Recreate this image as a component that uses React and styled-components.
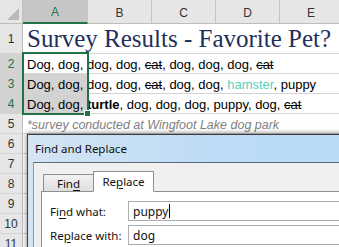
import styled, { createGlobalStyle } from "styled-components";

const GlobalStyle = createGlobalStyle`
  html, body { margin: 0; padding: 0; background: #fff; overflow: hidden; }
  body { width: 339px; height: 247px; font-family: "Liberation Sans", Arial, sans-serif; }
`;

const GREEN = "#217346";
const GRID = "#d4d4d4";

const columns = [
  { id: "A", width: 65, selected: true },
  { id: "B", width: 64 },
  { id: "C", width: 64 },
  { id: "D", width: 64 },
  { id: "E", width: 63 },
  { id: "F", width: 63 },
];

export default function App() {
  return (
    <>
      <GlobalStyle />
      <Sheet>
        <HeaderRow>
          <Corner>
            <svg width="12" height="12" viewBox="0 0 12 12">
              <polygon points="12,0 12,12 0,12" fill="#b9b9b9" />
            </svg>
          </Corner>
          {columns.map((c) => (
            <ColHead key={c.id} $w={c.width} $selected={c.selected}>
              {c.id}
            </ColHead>
          ))}
        </HeaderRow>

        <Row $h={30}>
          <RowHead>1</RowHead>
          <Title>Survey Results - Favorite Pet?</Title>
        </Row>

        <Row>
          <RowHead $selected>2</RowHead>
          <Cell>
            Dog, dog, dog, dog, <s>cat</s>, dog, dog, dog, <s>cat</s>
          </Cell>
        </Row>
        <Row>
          <RowHead $selected>3</RowHead>
          <Cell $shaded>
            Dog, dog, dog, dog, <s>cat</s>, dog, dog, <Teal>hamster</Teal>, puppy
          </Cell>
        </Row>
        <Row>
          <RowHead $selected>4</RowHead>
          <Cell $shaded>
            Dog, dog, <b>turtle</b>, dog, dog, dog, puppy, dog, <s>cat</s>
          </Cell>
        </Row>
        <Row>
          <RowHead>5</RowHead>
          <Note>*survey conducted at Wingfoot Lake dog park</Note>
        </Row>
        {[6, 7, 8, 9, 10, 11].map((n) => (
          <Row key={n}>
            <RowHead>{n}</RowHead>
            <Cell />
          </Row>
        ))}

        <Selection>
          <FillHandle />
        </Selection>

        <Dialog>
          <TitleBar>Find and Replace</TitleBar>
          <Body>
            <Tabs>
              <Tab>
                Fin<u>d</u>
              </Tab>
              <Tab $active>
                Re<u>p</u>lace
              </Tab>
            </Tabs>
            <Panel>
              <Field>
                <Label>
                  Fi<u>n</u>d what:
                </Label>
                <Input>
                  puppy<Caret />
                </Input>
              </Field>
              <Field>
                <Label>
                  Re<u>p</u>lace with:
                </Label>
                <Input>dog</Input>
              </Field>
            </Panel>
          </Body>
        </Dialog>
      </Sheet>
    </>
  );
}

const Sheet = styled.div`
  position: relative;
  width: 339px;
  height: 247px;
  overflow: hidden;
  background: #fff;
`;

const HeaderRow = styled.div`
  display: flex;
  height: 24px;
  box-sizing: border-box;
  background: #e6e6e6;
  border-bottom: 1px solid #bdbdbd;
`;

const Corner = styled.div`
  width: 23px;
  flex: none;
  display: flex;
  align-items: flex-end;
  justify-content: flex-end;
  padding: 0 3px 3px 0;
  box-sizing: border-box;
  border-right: 1px solid #bdbdbd;
`;

const ColHead = styled.div`
  width: ${({ $w }) => $w}px;
  flex: none;
  box-sizing: border-box;
  display: flex;
  align-items: center;
  justify-content: center;
  padding-top: 2px;
  font-family: "Liberation Sans", Arial, sans-serif;
  font-size: 12px;
  color: ${({ $selected }) => ($selected ? GREEN : "#333")};
  background: ${({ $selected }) => ($selected ? "#c6c6c6" : "transparent")};
  border-right: 1px solid #c4c4c4;
  border-bottom: ${({ $selected }) => ($selected ? `2px solid ${GREEN}` : "none")};
  margin-bottom: ${({ $selected }) => ($selected ? "-1px" : "0")};
`;

const Row = styled.div`
  display: flex;
  height: ${({ $h }) => $h || 20}px;
  box-sizing: border-box;
  border-bottom: 1px solid ${GRID};
`;

const RowHead = styled.div`
  width: 23px;
  flex: none;
  box-sizing: border-box;
  display: flex;
  align-items: center;
  justify-content: center;
  font-family: "Liberation Sans", Arial, sans-serif;
  font-size: 12px;
  color: ${({ $selected }) => ($selected ? GREEN : "#333")};
  background: ${({ $selected }) => ($selected ? "#d2d2d2" : "#e6e6e6")};
  border-right: 1px solid #bdbdbd;
`;

const Cell = styled.div`
  flex: 1;
  padding: 3px 0 0 4px;
  line-height: 16px;
  white-space: nowrap;
  font-family: "Liberation Sans", Arial, sans-serif;
  font-size: 13px;
  color: #000;
  background: ${({ $shaded }) =>
    $shaded ? "linear-gradient(to right, #d2d2d2 64px, transparent 64px)" : "none"};
  s { text-decoration-thickness: 1px; }
  b { font-weight: 700; }
`;

const Teal = styled.span`
  color: #5bd0bd;
`;

const Title = styled.div`
  flex: 1;
  padding: 1px 0 0 4px;
  line-height: 28px;
  white-space: nowrap;
  font-family: "Liberation Serif", "Times New Roman", serif;
  font-size: 25px;
  color: #1f2f5c;
`;

const Note = styled(Cell)`
  font-style: italic;
  font-size: 12.5px;
  color: #7f7f7f;
`;

const Selection = styled.div`
  position: absolute;
  left: 22px;
  top: 52px;
  width: 67px;
  height: 63px;
  box-sizing: border-box;
  border: 2px solid ${GREEN};
  pointer-events: none;
`;

const FillHandle = styled.div`
  position: absolute;
  right: -4px;
  bottom: -4px;
  width: 5px;
  height: 5px;
  background: ${GREEN};
  border: 1px solid #fff;
`;

const Dialog = styled.div`
  position: absolute;
  left: 27px;
  top: 134px;
  right: -20px;
  bottom: -20px;
  display: flex;
  flex-direction: column;
  border: 1px solid #3c3c3c;
  background: linear-gradient(to right, #d4e4f3, #bcdbf6 60%, #b8dbf7);
  box-shadow: 0 -2px 4px rgba(0, 0, 0, 0.25), -2px 0 4px rgba(0, 0, 0, 0.2);
  font-family: "Noto Sans", "Open Sans", sans-serif;
`;

const TitleBar = styled.div`
  height: 27px;
  flex: none;
  display: flex;
  align-items: center;
  padding-left: 7px;
  font-size: 11.5px;
  color: #111;
`;

const Body = styled.div`
  flex: 1;
  margin-left: 5px;
  background: #f0f0f0;
  border-top: 1px solid #5a6b7c;
  border-left: 1px solid #8a9aab;
  padding: 8px 0 0 7px;
  display: flex;
  flex-direction: column;
`;

const Tabs = styled.div`
  display: flex;
  align-items: flex-end;
  height: 21px;
  padding-left: 2px;
  margin-bottom: -1px;
  position: relative;
  z-index: 1;
`;

const Tab = styled.div`
  box-sizing: border-box;
  height: ${({ $active }) => ($active ? 21 : 18)}px;
  width: ${({ $active }) => ($active ? 61 : 51)}px;
  display: flex;
  align-items: center;
  justify-content: center;
  padding-top: ${({ $active }) => ($active ? 0 : 1)}px;
  font-size: 11.5px;
  color: #111;
  border: 1px solid #8e8f8f;
  border-bottom: ${({ $active }) => ($active ? "1px solid #fff" : "1px solid #8e8f8f")};
  margin-left: ${({ $active }) => ($active ? "-1px" : "0")};
  background: ${({ $active }) =>
    $active ? "#fff" : "linear-gradient(to bottom, #f2f2f2, #dedede)"};
  u { text-underline-offset: 2px; }
`;

const Panel = styled.div`
  flex: 1;
  background: #fff;
  border: 1px solid #8e8f8f;
  border-right: none;
  padding: 9px 0 0 8px;
  display: flex;
  flex-direction: column;
  gap: 4px;
`;

const Field = styled.div`
  display: flex;
  align-items: center;
`;

const Label = styled.div`
  width: 78px;
  flex: none;
  font-size: 11.5px;
  color: #111;
  u { text-underline-offset: 2px; }
`;

const Input = styled.div`
  flex: 1;
  height: 20px;
  box-sizing: border-box;
  border: 1px solid #abadb3;
  border-right: none;
  padding-left: 4px;
  display: flex;
  align-items: center;
  font-size: 12px;
  color: #111;
`;

const Caret = styled.span`
  display: inline-block;
  width: 1px;
  height: 14px;
  background: #000;
  margin-left: 1px;
`;
